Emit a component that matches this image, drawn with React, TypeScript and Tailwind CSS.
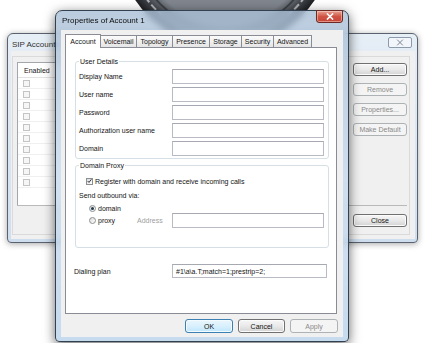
import type { ReactNode } from "react";

// Vista-style dialogs: "SIP Accounts" behind, "Properties of Account 1" in front.

const tabs = ["Account", "Voicemail", "Topology", "Presence", "Storage", "Security", "Advanced"];
const tabWidths = ["w-[36px]", "w-[36px]", "w-[36px]", "w-[37px]", "w-[32px]", "w-[32px]", "w-[38px]"];

export default function App() {
  return (
    <div className="relative h-[343px] w-[425px] overflow-hidden bg-white font-['Liberation_Sans',Arial,sans-serif] text-[7px] leading-none text-[#141414]">
      <Globe />
      <SipAccounts />
      <Properties />
    </div>
  );
}

function Globe() {
  return (
    <svg className="absolute left-[117px] top-0" width="216" height="50" viewBox="117 0 216 50">
      <defs>
        <radialGradient id="globe" cx="225" cy="-60" r="108" gradientUnits="userSpaceOnUse">
          <stop offset="0.78" stopColor="#80868e" />
          <stop offset="0.9" stopColor="#44484e" />
          <stop offset="1" stopColor="#1c1e21" />
        </radialGradient>
      </defs>
      <circle cx="225" cy="-60" r="108" fill="url(#globe)" />
      <circle cx="225" cy="-60" r="98" fill="none" stroke="#d3d6da" strokeWidth="2" strokeDasharray="7 3" opacity="0.75" />
      <circle cx="225" cy="-60" r="91" fill="none" stroke="#2e3135" strokeWidth="2" opacity="0.7" />
    </svg>
  );
}

function CloseGlyph({ color, thin }: { color: string; thin?: boolean }) {
  return (
    <svg width="8" height="7" viewBox="0 0 8 7">
      <path
        d="M1.5 1 L6.5 6 M6.5 1 L1.5 6"
        stroke={color}
        strokeWidth={thin ? 1 : 1.6}
        strokeLinecap="square"
      />
    </svg>
  );
}

function Btn({
  children,
  className = "",
  disabled,
  primary,
}: {
  children: ReactNode;
  className?: string;
  disabled?: boolean;
  primary?: boolean;
}) {
  const look = disabled
    ? "border-[#adb2b5] bg-[#f4f4f4] text-[#8a8a8a]"
    : primary
      ? "border-[#3c7fb1] bg-linear-to-b from-[#eaf6fd] via-[#d9f0fc] to-[#bee6fd] shadow-[inset_0_0_0_1px_#f4fbff]"
      : "border-[#707070] bg-linear-to-b from-[#f6f6f6] via-[#e9e9e9] to-[#d3d3d3] shadow-[inset_0_0_0_1px_#fbfbfb]";
  return (
    <div className={`flex items-center justify-center rounded-[3px] border ${look} ${className}`}>
      {children}
    </div>
  );
}

function Field({ className = "", children }: { className?: string; children?: ReactNode }) {
  return (
    <div className={`flex items-center border border-[#b8bbc3] border-t-[#a6a9b1] bg-white pl-[3px] ${className}`}>
      {children}
    </div>
  );
}

function Check({ checked, faint }: { checked?: boolean; faint?: boolean }) {
  return (
    <div
      className={`flex h-[7px] w-[7px] shrink-0 items-center justify-center border ${
        faint ? "border-[#c4c4c4] bg-[#f6f6f6]" : "border-[#8e8f8f] bg-linear-to-br from-[#dcdcdc] to-white"
      }`}
    >
      {checked && (
        <svg width="6" height="6" viewBox="0 0 6 6">
          <path d="M0.8 3 L2.4 4.7 L5.3 0.9" fill="none" stroke="#2b3a4a" strokeWidth="1.2" />
        </svg>
      )}
    </div>
  );
}

function Radio({ checked }: { checked?: boolean }) {
  return (
    <div className="flex h-[7px] w-[7px] shrink-0 items-center justify-center rounded-full border border-[#8e8f8f] bg-linear-to-br from-[#dadada] to-white">
      {checked && <div className="h-[3px] w-[3px] rounded-full bg-[#1f3b54]" />}
    </div>
  );
}

function Group({ title, className = "", children }: { title: string; className?: string; children: ReactNode }) {
  return (
    <div className={`relative w-[254px] rounded-[3px] border border-[#d5dfe5] ${className}`}>
      <span className="absolute -top-[5px] left-[3px] bg-white px-[1px] leading-[9px]">{title}</span>
      {children}
    </div>
  );
}

function Row({ label }: { label: string }) {
  return (
    <div className="flex h-[15px] items-center">
      <span className="w-[93px]">{label}</span>
      <Field className="h-[15px] w-[152px]" />
    </div>
  );
}

function SipAccounts() {
  return (
    <div className="absolute left-[7px] top-[33px] flex h-[210px] w-[411px] flex-col rounded-t-[6px] rounded-b-[4px] border border-[#59626e] bg-linear-to-b from-[#e6eef6] to-[#cfdeee] pb-[3px] pl-[3px] pr-[2px] shadow-[0_1px_6px_rgba(0,0,0,0.35)]">
      <div className="flex h-[17px] items-start justify-between">
        <span className="pl-[1px] pt-[6px] text-[8px] leading-[9px] text-[#333]">SIP Accounts</span>
        <div className="mr-[3px] mt-[3px] flex h-[11px] w-[24px] items-center justify-center rounded-[2px] border border-[#8d9aab] bg-[#f2f6fa]">
          <CloseGlyph color="#7a8492" thin />
        </div>
      </div>
      <div className="flex flex-1 flex-col bg-[#f0f0f0]">
        <div className="mb-[4px] ml-[1px] mr-[5px] mt-[5px] flex flex-1 flex-col border border-[#dadada] pl-[4px] pr-[2px] pt-[5px]">
          <div className="flex h-[144px] border-b border-[#b9b9b9]">
            <div className="w-[300px] border-l border-t border-[#a3a6ad] bg-white">
              <div className="flex h-[15px] items-center border-b border-[#e3e3e3] pl-[6px]">Enabled</div>
              {Array.from({ length: 10 }).map((_, i) => (
                <div key={i} className="flex h-[11px] items-center border-b border-[#f0f0f0] pl-[5px]">
                  <Check faint />
                </div>
              ))}
            </div>
            <div className="ml-auto mt-[1px] flex w-[54px] flex-col gap-[7px]">
              <Btn className="h-[13px]">Add...</Btn>
              <Btn className="h-[13px]" disabled>Remove</Btn>
              <Btn className="h-[13px]" disabled>Properties...</Btn>
              <Btn className="h-[13px]" disabled>Make Default</Btn>
            </div>
          </div>
          <div className="mt-[8px] flex justify-end">
            <Btn className="h-[13px] w-[54px]">Close</Btn>
          </div>
        </div>
      </div>
    </div>
  );
}

function Properties() {
  return (
    <div className="absolute left-[55px] top-[10px] flex h-[332px] w-[294px] flex-col rounded-t-[7px] rounded-b-[4px] border border-[#33404f] bg-linear-to-b from-[#a9bfd6]/80 via-[#c6daee]/80 to-[#bdd5ec]/85 px-[5px] pb-[4px] shadow-[0_3px_12px_rgba(0,0,0,0.6)] backdrop-blur-[3px]">
      <div className="flex h-[19px] items-start justify-between">
        <span className="flex h-[19px] items-center pl-[1px] text-[8px] text-[#0c0c0c]">Properties of Account 1</span>
        <div className="-mt-[1px] flex h-[13px] w-[27px] items-center justify-center rounded-b-[3px] border border-[#6b2a22] bg-linear-to-b from-[#e7a195] via-[#cf5443] to-[#c6453a] shadow-[inset_0_0_0_1px_rgba(255,220,210,0.5)]">
          <CloseGlyph color="#ffffff" />
        </div>
      </div>
      <div className="flex flex-1 flex-col bg-[#f0f0f0] pb-[4px] pl-[4px] pr-[5px] pt-[4px]">
        <div className="flex h-[13px] items-end">
          {tabs.map((t, i) =>
            i === 0 ? (
              <div
                key={t}
                className={`relative z-10 -mb-[1px] flex h-[14px] items-center justify-center border-x border-t border-[#898c95] bg-white ${tabWidths[i]}`}
              >
                {t}
              </div>
            ) : (
              <div
                key={t}
                className={`flex h-[12px] items-center justify-center border-r border-t border-[#898c95] bg-linear-to-b from-[#fbfbfb] to-[#e5e5e5] ${tabWidths[i]}`}
              >
                {t}
              </div>
            ),
          )}
        </div>
        <div className="flex h-[267px] w-[272px] flex-col border border-[#898c95] bg-white pl-[9px]">
          <Group title="User Details" className="mt-[13px] h-[98px]">
            <div className="flex flex-col gap-[3px] pl-[3px] pt-[7px]">
              <Row label="Display Name" />
              <Row label="User name" />
              <Row label="Password" />
              <Row label="Authorization user name" />
              <Row label="Domain" />
            </div>
          </Group>
          <Group title="Domain Proxy" className="mt-[6px] h-[83px]">
            <div className="flex flex-col pl-[3px] pt-[10px]">
              <div className="flex h-[10px] items-center gap-[2px] pl-[7px]">
                <Check checked />
                <span>Register with domain and receive incoming calls</span>
              </div>
              <div className="mt-[4px] flex h-[10px] items-center">Send outbound via:</div>
              <div className="mt-[3px] flex h-[10px] items-center gap-[2px] pl-[10px]">
                <Radio checked />
                <span>domain</span>
              </div>
              <div className="flex h-[15px] items-center">
                <div className="flex w-[58px] items-center gap-[2px] pl-[10px]">
                  <Radio />
                  <span>proxy</span>
                </div>
                <span className="w-[35px] text-[#a0a0a0]">Address</span>
                <Field className="h-[15px] w-[152px]" />
              </div>
            </div>
          </Group>
          <div className="-ml-[1px] mt-[16px] flex h-[14px] items-center">
            <span className="w-[98px]">Dialing plan</span>
            <Field className="h-[14px] w-[155px]">#1\a\a.T;match=1;prestrip=2;</Field>
          </div>
        </div>
        <div className="mt-[5px] flex justify-end gap-[5px]">
          <Btn primary className="h-[14px] w-[48px]">OK</Btn>
          <Btn className="h-[14px] w-[47px]">Cancel</Btn>
          <Btn disabled className="h-[14px] w-[48px]">Apply</Btn>
        </div>
      </div>
    </div>
  );
}
